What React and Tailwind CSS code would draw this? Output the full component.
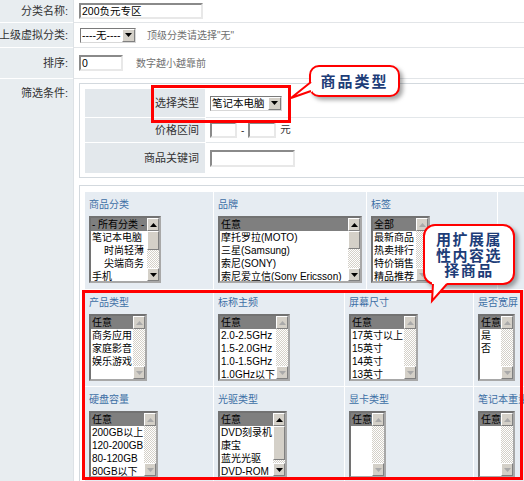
import React from 'react';

function ArrowBtn({ up, dim, size = 'w-[13px] h-[13px]' }) {
  return (
    <div className={`${size} shrink-0 bg-[#d4d0c8] border border-t-white border-l-white border-r-[#808080] border-b-[#808080] flex items-center justify-center`}>
      <svg width="7" height="4" viewBox="0 0 7 4">
        <path d={up ? 'M0 4L3.5 0L7 4Z' : 'M0 0L3.5 4L7 0Z'} fill={dim ? '#a9a9a9' : '#000'} />
      </svg>
    </div>
  );
}

function ScrollBar({ thumb }) {
  return (
    <div className="w-[12px] h-full shrink-0 flex flex-col">
      <ArrowBtn up dim={!thumb} size="w-[12px] h-[13px]" />
      <div className="flex-1 bg-[#ebe9e3] bg-[image:repeating-conic-gradient(#ffffff_0_25%,#d4d0c8_0_50%)] bg-[length:2px_2px]">
        {thumb && (
          <div className={`${thumb} bg-[#d4d0c8] border border-t-white border-l-white border-r-[#808080] border-b-[#808080]`} />
        )}
      </div>
      <ArrowBtn dim={!thumb} size="w-[12px] h-[13px]" />
    </div>
  );
}

function ListBox({ w, items, thumb, indent = [] }) {
  return (
    <div className={`${w} h-[67px] mt-[5px] flex bg-white border-2 border-t-[#727272] border-l-[#727272] border-r-[#a8a8a8] border-b-[#a8a8a8] overflow-hidden`}>
      <div className="flex-1 min-w-0 overflow-hidden text-[10px] text-black">
        {items.map((it, i) => (
          <div
            key={i}
            className={`h-[13px] leading-[13px] whitespace-nowrap ${i === 0 ? 'bg-[#7f7f7f]' : ''} ${indent.includes(i) ? 'pl-[13px]' : 'pl-[1px]'}`}
          >
            {it}
          </div>
        ))}
      </div>
      <ScrollBar thumb={thumb} />
    </div>
  );
}

function Cell({ w, title, children }) {
  return (
    <div className={`${w} h-full shrink-0 bg-[#e6ecf2] pl-[4px] pt-[7px] overflow-hidden`}>
      <div className="text-[10px] leading-[12px] text-[#3d6fa5] whitespace-nowrap">{title}</div>
      {children}
    </div>
  );
}

function Select({ w, text }) {
  return (
    <div className={`${w} h-[15px] flex items-center bg-white border border-t-[#7a7a7a] border-l-[#7a7a7a] border-r-[#d8d8d8] border-b-[#d8d8d8]`}>
      <div className="flex-1 min-w-0 pl-[1px] text-[10.5px] leading-[13px] text-black whitespace-nowrap overflow-hidden">{text}</div>
      <ArrowBtn />
    </div>
  );
}

const inputCls = 'h-[16px] bg-white border-2 border-t-[#8a8a8a] border-l-[#8a8a8a] border-r-[#e8e8e8] border-b-[#e8e8e8] text-[10.5px] leading-[12px] text-black pl-[1px] whitespace-nowrap';

export default function App() {
  return (
    <div className="relative w-[524px] h-[481px] overflow-hidden bg-white font-['Liberation_Sans','Noto_Sans_CJK_SC',sans-serif] text-[11px] text-[#333]">
      {/* 分类名称 */}
      <div className="flex">
        <div className="w-[73px] h-[23px] shrink-0 bg-[#e8edf0] border-b border-white flex items-center justify-end pr-[5px] whitespace-nowrap">分类名称:</div>
        <div className="flex-1 h-[23px] border-l border-[#dde2e6] border-b border-b-[#e2e5e8] flex items-center pl-[5px]">
          <div className={`w-[124px] ${inputCls}`}>200负元专区</div>
        </div>
      </div>

      {/* 上级虚拟分类 */}
      <div className="flex">
        <div className="w-[73px] h-[25px] shrink-0 bg-[#e8edf0] border-b border-white flex items-center justify-end pr-[5px] whitespace-nowrap">上级虚拟分类:</div>
        <div className="flex-1 h-[25px] border-l border-[#dde2e6] border-b border-b-[#e2e5e8] flex items-center pl-[6px]">
          <Select w="w-[56px]" text="----无----" />
          <span className="ml-[11px] text-[10px] text-[#707070]">顶级分类请选择"无"</span>
        </div>
      </div>

      {/* 排序 */}
      <div className="flex">
        <div className="w-[73px] h-[31px] shrink-0 bg-[#e8edf0] border-b border-white flex items-center justify-end pr-[5px]">排序:</div>
        <div className="flex-1 h-[31px] border-l border-[#dde2e6] border-b border-b-[#e2e5e8] flex items-center pl-[5px]">
          <div className={`w-[44px] ${inputCls}`}>0</div>
          <span className="ml-[13px] text-[10px] text-[#707070]">数字越小越靠前</span>
        </div>
      </div>

      {/* 筛选条件 */}
      <div className="flex h-[402px]">
        <div className="w-[73px] shrink-0 bg-[#e8edf0] flex justify-end pr-[5px] pt-[6px]">筛选条件:</div>
        <div className="flex-1 border-l border-[#dde2e6] pl-[5px] pt-[4px]">
          <div className="w-[470px] border border-[#d3d9de] p-[5px] pb-[4px]">
            <div className="flex h-[29px]">
              <div className="w-[121px] shrink-0 bg-[#e3e8ec] border-b border-white border-r border-r-white flex items-center justify-end pr-[6px]">选择类型</div>
              <div className="flex-1 border-b border-[#e3e7ea] flex items-center pl-[4px]">
                <Select w="w-[72px]" text="笔记本电脑" />
              </div>
            </div>
            <div className="flex h-[25px]">
              <div className="w-[121px] shrink-0 bg-[#e3e8ec] border-b border-white border-r border-r-white flex items-center justify-end pr-[6px]">价格区间</div>
              <div className="flex-1 border-b border-[#e3e7ea] flex items-center pl-[4px]">
                <div className={`w-[27px] ${inputCls}`} />
                <span className="mx-[4px] text-[10px]">-</span>
                <div className={`w-[28px] ${inputCls}`} />
                <span className="ml-[4px] text-[10.5px]">元</span>
              </div>
            </div>
            <div className="flex h-[30px]">
              <div className="w-[121px] shrink-0 bg-[#e3e8ec] border-r border-r-white flex items-center justify-end pr-[6px]">商品关键词</div>
              <div className="flex-1 flex items-center pl-[4px]">
                <div className={`w-[85px] h-[17px] ${inputCls}`} />
              </div>
            </div>
          </div>

          <div className="w-[470px] mt-[7px] border border-[#d3d9de] pt-[6px] px-[5px] h-[300px]">
            <div className="flex gap-[1px] h-[97px]">
              <Cell w="w-[128px]" title="商品分类">
                <ListBox
                  w="w-[72px]"
                  items={['- 所有分类 -', '笔记本电脑', '时尚轻薄', '尖端商务', '手机']}
                  indent={[2, 3]}
                  thumb="h-[19px]"
                />
              </Cell>
              <Cell w="w-[152px]" title="品牌">
                <ListBox
                  w="w-[144px]"
                  items={['任意', '摩托罗拉(MOTO)', '三星(Samsung)', '索尼(SONY)', '索尼爱立信(Sony Ericsson)']}
                  thumb="h-[18px]"
                />
              </Cell>
              <Cell w="w-[130px]" title="标签">
                <ListBox w="w-[59px]" items={['全部', '最新商品', '热卖排行', '特价销售', '精品推荐']} />
              </Cell>
              <div className="flex-1 bg-[#e6ecf2]" />
            </div>

            <div className="flex gap-[1px] h-[96px] mt-[1px]">
              <Cell w="w-[128px]" title="产品类型">
                <ListBox w="w-[58px]" items={['任意', '商务应用', '家庭影音', '娱乐游戏']} />
              </Cell>
              <Cell w="w-[130px]" title="标称主频">
                <ListBox w="w-[72px]" items={['任意', '2.0-2.5GHz', '1.5-2.0GHz', '1.0-1.5GHz', '1.0GHz以下']} />
              </Cell>
              <Cell w="w-[128px]" title="屏幕尺寸">
                <ListBox w="w-[69px]" items={['任意', '17英寸以上', '15英寸', '14英寸', '13英寸']} />
              </Cell>
              <Cell w="w-[60px]" title="是否宽屏">
                <ListBox w="w-[37px]" items={['任意', '是', '否']} />
              </Cell>
            </div>

            <div className="flex gap-[1px] h-[96px] mt-[1px]">
              <Cell w="w-[128px]" title="硬盘容量">
                <ListBox w="w-[69px]" items={['任意', '200GB以上', '120-200GB', '80-120GB', '80GB以下']} />
              </Cell>
              <Cell w="w-[130px]" title="光驱类型">
                <ListBox w="w-[69px]" items={['任意', 'DVD刻录机', '康宝', '蓝光光驱', 'DVD-ROM']} thumb="h-[34px]" />
              </Cell>
              <Cell w="w-[128px]" title="显卡类型">
                <ListBox w="w-[37px]" items={['任意']} />
              </Cell>
              <Cell w="w-[60px]" title="笔记本重量">
                <ListBox w="w-[37px]" items={['任意']} />
              </Cell>
            </div>
          </div>
        </div>
      </div>

      {/* annotations */}
      <div className="absolute left-[151px] top-[85px] w-[140px] h-[38px] border-[3px] border-[#ff0000]" />
      <div className="absolute left-[82px] top-[290px] w-[441px] h-[190px] border-[3px] border-[#ff0000]" />

      <div className="absolute left-[309px] top-[65px] w-[91px] h-[32px] rounded-[10px] border-2 border-[#ff0000] bg-white shadow-[3px_3px_4px_rgba(0,0,0,0.35)] flex items-center justify-center font-['Noto_Sans_CJK_SC',sans-serif] text-[15px] font-bold tracking-[2px] text-[#1d3d78]">
        商品类型
      </div>
      <svg className="absolute left-[288px] top-[78px]" width="26" height="24" viewBox="288 78 26 24">
        <polygon points="291,98 312,81 312,92" fill="#fff" />
        <polyline points="311,82 291,98 311,91" fill="none" stroke="#ff0000" strokeWidth="2" strokeLinejoin="miter" />
      </svg>

      <div className="absolute left-[423px] top-[224px] w-[92px] h-[61px] rounded-[12px] border-2 border-[#ff0000] bg-white shadow-[3px_3px_4px_rgba(0,0,0,0.35)] flex flex-col items-center justify-center font-['Noto_Sans_CJK_SC',sans-serif] text-[15px] leading-[15.5px] font-bold tracking-[1.5px] text-[#1d3d78]">
        <div>用扩展属</div>
        <div>性内容选</div>
        <div>择商品</div>
      </div>
      <svg className="absolute left-[428px] top-[280px]" width="24" height="24" viewBox="428 280 24 24">
        <polygon points="432,301 432,282 448,282" fill="#fff" />
        <polyline points="433,284 432,301 447,284" fill="none" stroke="#ff0000" strokeWidth="2" strokeLinejoin="miter" />
      </svg>
    </div>
  );
}
